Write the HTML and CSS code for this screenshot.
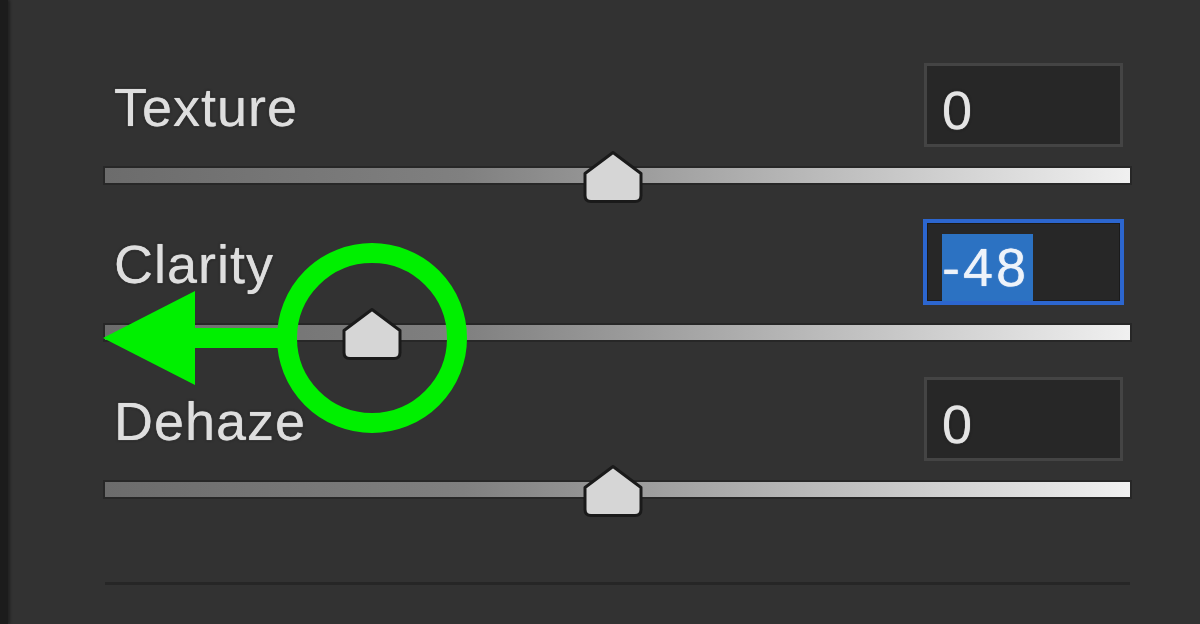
FILE: index.html
```html
<!DOCTYPE html>
<html lang="en">
<head>
    <meta charset="UTF-8">
    <meta name="viewport" content="width=device-width, initial-scale=1.0">
    <title>Presence - Texture, Clarity, Dehaze</title>
    <link rel="stylesheet" href="styles.css">
</head>
<body>
    <div class="screen">
        <div class="edge"></div>

        <div class="panel">
            <div class="sliders">

                <div class="row">
                    <div class="row-head">
                        <span class="label">Texture</span>
                        <div class="value"><span class="num">0</span></div>
                    </div>
                    <div class="track">
                        <svg class="thumb" style="left: 49.6%" viewBox="0 0 62 54">
                            <path d="M31 2.5 L59 23.5 L59 45.5 Q59 51.5 53 51.5 L9 51.5 Q3 51.5 3 45.5 L3 23.5 Z" />
                        </svg>
                    </div>
                </div>

                <div class="row">
                    <div class="row-head">
                        <span class="label">Clarity</span>
                        <div class="value focused"><span class="num selected">-48</span></div>
                    </div>
                    <div class="track">
                        <svg class="thumb" style="left: 26%" viewBox="0 0 62 54">
                            <path d="M31 2.5 L59 23.5 L59 45.5 Q59 51.5 53 51.5 L9 51.5 Q3 51.5 3 45.5 L3 23.5 Z" />
                        </svg>
                    </div>
                </div>

                <div class="row">
                    <div class="row-head">
                        <span class="label">Dehaze</span>
                        <div class="value"><span class="num">0</span></div>
                    </div>
                    <div class="track">
                        <svg class="thumb" style="left: 49.6%" viewBox="0 0 62 54">
                            <path d="M31 2.5 L59 23.5 L59 45.5 Q59 51.5 53 51.5 L9 51.5 Q3 51.5 3 45.5 L3 23.5 Z" />
                        </svg>
                    </div>
                </div>

            </div>

            <div class="divider"></div>
        </div>

        <!-- green annotation drawn over the clarity slider -->
        <svg class="callout" viewBox="0 0 1200 624">
            <circle cx="372" cy="338" r="85" />
            <rect x="188" y="328" width="96" height="20" />
            <polygon points="103,338 195,291 195,385" />
        </svg>
    </div>
</body>
</html>
```

FILE: styles.css
```css
/* General Styles */
body {
    margin: 0;
    background: #323232;
    font-family: 'Liberation Sans', Arial, sans-serif;
    color: #dedede;
}

.screen {
    position: relative;
    display: flex;
    width: 1200px;
    height: 624px;
    overflow: hidden;
    background: #323232;
}

.edge {
    width: 8px;
    flex-shrink: 0;
    background: #1c1c1c;
    box-shadow: 2px 0 3px rgba(0, 0, 0, 0.35);
}

.panel {
    flex: 1;
    padding: 63px 70px 0 97px;
}

.sliders {
    display: flex;
    flex-direction: column;
    gap: 37px;
}

.row-head {
    display: flex;
    align-items: center;
    justify-content: space-between;
    height: 84px;
}

.label {
    margin-left: 9px;
    padding-top: 3px;
    font-size: 54px;
    line-height: 1;
    letter-spacing: 1px;
    text-shadow: 0 0 1px #dedede, 0 0 3px #111;
}

.value {
    box-sizing: border-box;
    width: 199px;
    height: 84px;
    margin-right: 7px;
    padding: 11px 0 0 15px;
    background: #272727;
    border: 3px solid #444444;
}

.value.focused {
    border-color: #2c66cf;
    box-shadow: 0 0 0 1px #2c66cf, inset 0 0 0 1px #1a1a1a;
}

.num {
    display: inline-block;
    font-size: 54px;
    line-height: 67px;
    letter-spacing: 3px;
    color: #e4e4e4;
    text-shadow: 0 0 1px #e4e4e4, 0 0 3px #111;
}

.num.selected {
    padding-right: 4px;
    background: #2c72c2;
    color: #eef3fa;
    text-shadow: 0 0 1px #eef3fa;
}

/* slider track */
.track {
    position: relative;
    height: 15px;
    margin-top: 21px;
    background: linear-gradient(to right, #6c6c6c 0%, #808080 35%, #9c9c9c 52%, #c4c4c4 75%, #f0f0f0 100%);
    box-shadow: 0 0 0 2px #272727;
}

.thumb {
    position: absolute;
    top: -18px;
    width: 62px;
    height: 54px;
    transform: translateX(-50%);
}

.thumb path {
    fill: #d6d6d6;
    stroke: #1a1a1a;
    stroke-width: 3;
    stroke-linejoin: round;
}

.divider {
    height: 3px;
    margin-top: 85px;
    background: #262626;
}

/* annotation overlay */
.callout {
    position: absolute;
    top: 0;
    left: 0;
    width: 1200px;
    height: 624px;
    pointer-events: none;
}

.callout circle {
    fill: none;
    stroke: #00f000;
    stroke-width: 20;
}

.callout rect,
.callout polygon {
    fill: #00f000;
}
```
